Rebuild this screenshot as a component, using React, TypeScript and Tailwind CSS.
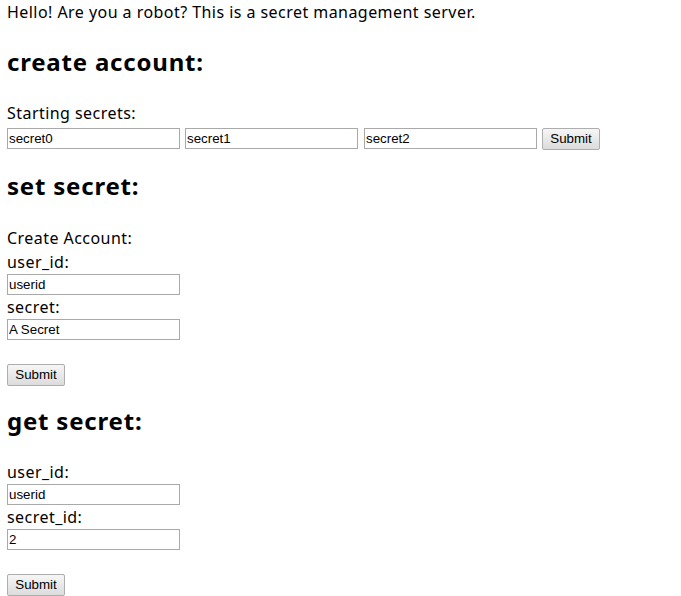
const text = "font-['Noto_Sans',sans-serif] text-[16px] tracking-[0.45px] text-black";
const heading =
  "font-['Noto_Sans',sans-serif] text-[24px] font-bold tracking-[0.8px] text-black h-[32px] leading-[32px]";
const field =
  "block h-[21px] w-[173px] border border-[#a9a9a9] bg-white px-[1px] font-['Liberation_Sans',Arial,sans-serif] text-[13.33px] text-black outline-none";
const button =
  "block h-[22px] w-[58px] rounded-[2px] border border-[#adadad] bg-gradient-to-b from-[#f6f6f6] to-[#dcdcdc] font-['Liberation_Sans',Arial,sans-serif] text-[13.33px] text-black";

function Label({ children, className = "" }: { children: React.ReactNode; className?: string }) {
  return <div className={`${text} h-[24px] leading-[24px] ${className}`}>{children}</div>;
}

export default function App() {
  return (
    <div className="flex flex-col items-start bg-white pl-[7px] min-h-[596px]">
      <Label>Hello! Are you a robot? This is a secret management server.</Label>

      <h2 className={`${heading} mt-[22px]`}>create account:</h2>
      <Label className="mt-[23px]">Starting secrets:</Label>
      <div className="mt-[3px] flex items-start">
        <input className={field} defaultValue="secret0" />
        <input className={`${field} ml-[5px]`} defaultValue="secret1" />
        <input className={`${field} ml-[6px]`} defaultValue="secret2" />
        <button className={`${button} ml-[5px]`}>Submit</button>
      </div>

      <h2 className={`${heading} mt-[20px]`}>set secret:</h2>
      <Label className="mt-[24px]">Create Account:</Label>
      <Label>user_id:</Label>
      <input className={field} defaultValue="userid" />
      <Label>secret:</Label>
      <input className={field} defaultValue="A Secret" />
      <button className={`${button} mt-[24px]`}>Submit</button>

      <h2 className={`${heading} mt-[19px]`}>get secret:</h2>
      <Label className="mt-[23px]">user_id:</Label>
      <input className={field} defaultValue="userid" />
      <Label>secret_id:</Label>
      <input className={field} defaultValue="2" />
      <button className={`${button} mt-[24px]`}>Submit</button>
    </div>
  );
}
